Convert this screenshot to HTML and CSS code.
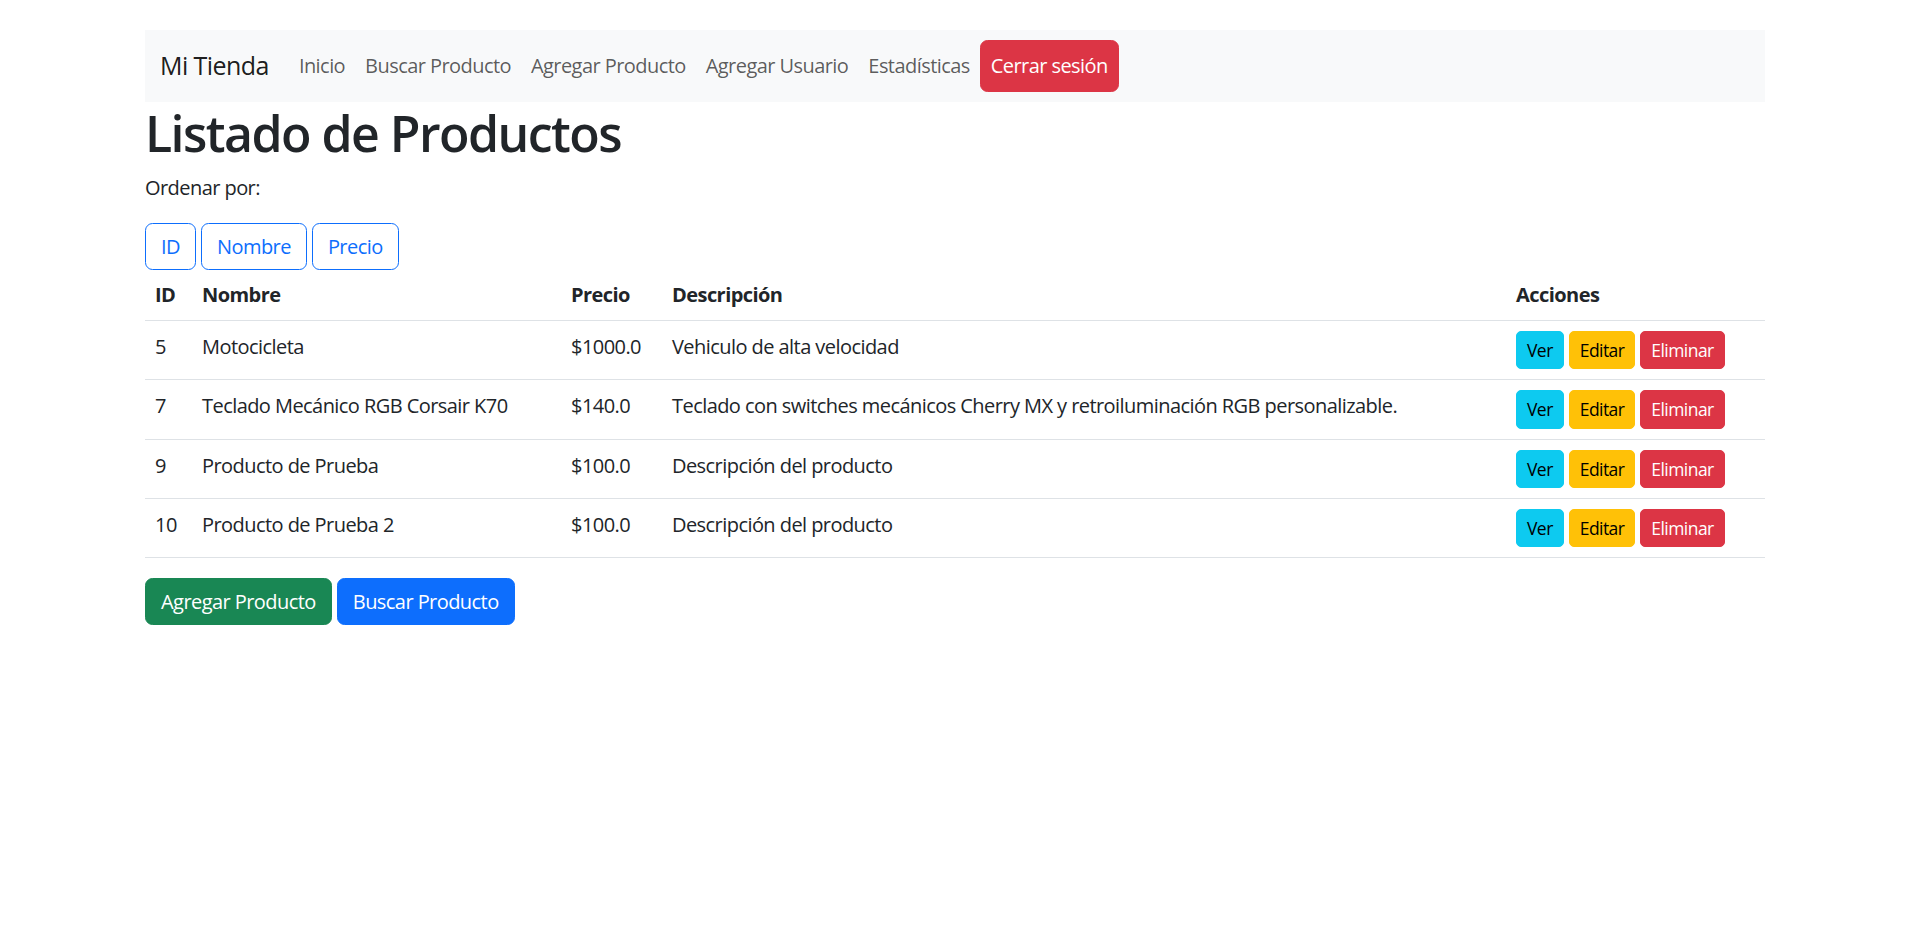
FILE: index.html
```html
<!DOCTYPE html>
<html lang="es">
<head>
<meta charset="utf-8">
<title>Listado de Productos</title>
<link rel="stylesheet" href="styles.css">
</head>
<body>
<div class="page">
  <nav class="navbar">
    <div class="navbar-inner">
      <a class="brand" href="#">Mi Tienda</a>
      <a class="nav-link" href="#">Inicio</a>
      <a class="nav-link" href="#">Buscar Producto</a>
      <a class="nav-link" href="#">Agregar Producto</a>
      <a class="nav-link" href="#">Agregar Usuario</a>
      <a class="nav-link" href="#">Estadísticas</a>
      <a class="nav-link logout" href="#">Cerrar sesión</a>
    </div>
  </nav>

  <h1 class="title">Listado de Productos</h1>
  <p class="sort-label">Ordenar por:</p>
  <div class="sort-buttons">
    <a class="btn btn-outline" href="#">ID</a>
    <a class="btn btn-outline" href="#">Nombre</a>
    <a class="btn btn-outline" href="#">Precio</a>
  </div>

  <table class="table">
    <colgroup>
      <col class="c-id">
      <col class="c-name">
      <col class="c-price">
      <col class="c-desc">
      <col class="c-act">
    </colgroup>
    <thead>
      <tr><th>ID</th><th>Nombre</th><th>Precio</th><th>Descripción</th><th>Acciones</th></tr>
    </thead>
    <tbody>
      <tr>
        <td>5</td><td>Motocicleta</td><td>$1000.0</td><td>Vehiculo de alta velocidad</td>
        <td><div class="actions"><a class="btn-sm info" href="#">Ver</a><a class="btn-sm warning" href="#">Editar</a><a class="btn-sm danger" href="#">Eliminar</a></div></td>
      </tr>
      <tr>
        <td>7</td><td>Teclado Mecánico RGB Corsair K70</td><td>$140.0</td><td>Teclado con switches mecánicos Cherry MX y retroiluminación RGB personalizable.</td>
        <td><div class="actions"><a class="btn-sm info" href="#">Ver</a><a class="btn-sm warning" href="#">Editar</a><a class="btn-sm danger" href="#">Eliminar</a></div></td>
      </tr>
      <tr>
        <td>9</td><td>Producto de Prueba</td><td>$100.0</td><td>Descripción del producto</td>
        <td><div class="actions"><a class="btn-sm info" href="#">Ver</a><a class="btn-sm warning" href="#">Editar</a><a class="btn-sm danger" href="#">Eliminar</a></div></td>
      </tr>
      <tr>
        <td>10</td><td>Producto de Prueba 2</td><td>$100.0</td><td>Descripción del producto</td>
        <td><div class="actions"><a class="btn-sm info" href="#">Ver</a><a class="btn-sm warning" href="#">Editar</a><a class="btn-sm danger" href="#">Eliminar</a></div></td>
      </tr>
    </tbody>
  </table>

  <div class="bottom-buttons">
    <a class="btn btn-success" href="#">Agregar Producto</a>
    <a class="btn btn-primary" href="#">Buscar Producto</a>
  </div>
</div>
</body>
</html>
```
FILE: styles.css
```css
* { box-sizing: border-box; }

body {
  margin: 0;
  font-family: "Segoe UI", "Open Sans", "Noto Sans", sans-serif;
  font-size: 20px;
  line-height: 1.5;
  letter-spacing: -0.028em;
  color: #212529;
  background: #fff;
}

a { text-decoration: none; }

.page {
  max-width: 1650px;
  margin: 30px auto 0;
  padding: 0 15px;
}

.navbar {
  background: #f8f9fa;
  padding: 10px 0;
}

.navbar-inner {
  display: flex;
  align-items: center;
  padding: 0 15px;
}

.brand {
  font-size: 25px;
  line-height: 1.5;
  padding: 6px 0;
  margin-right: 20px;
  color: rgba(0, 0, 0, 0.9);
}

.nav-link {
  padding: 10px;
  color: rgba(0, 0, 0, 0.65);
  line-height: 30px;
}

.logout {
  background: #dc3545;
  border: 1px solid #dc3545;
  border-radius: 7.5px;
  color: #fff;
}

.title {
  font-size: 50px;
  font-weight: 600;
  line-height: 1.2;
  letter-spacing: -1.55px;
  margin: 0 0 10px;
  padding-top: 1px;
}

.sort-label {
  margin: 0 0 20px;
}

.sort-buttons,
.bottom-buttons {
  display: flex;
  gap: 5px;
}

.btn {
  display: inline-block;
  padding: 7.5px 15px;
  border: 1px solid transparent;
  border-radius: 7.5px;
  font-size: 20px;
  line-height: 30px;
}

.btn-outline {
  border-color: #0d6efd;
  color: #0d6efd;
}

.btn-success {
  background: #198754;
  border-color: #198754;
  color: #fff;
}

.btn-primary {
  background: #0d6efd;
  border-color: #0d6efd;
  color: #fff;
}

.table {
  width: 100%;
  border-collapse: collapse;
  table-layout: fixed;
  margin-bottom: 20px;
}

.c-id { width: 47px; }
.c-name { width: 369px; }
.c-price { width: 101px; }
.c-desc { width: 844px; }
.c-act { width: 259px; }

.table th,
.table td {
  padding: 10px;
  text-align: left;
  vertical-align: top;
  border-bottom: 1px solid #dee2e6;
}

.table td {
  padding-top: 11px;
  padding-bottom: 9px;
}

.table th {
  font-weight: 700;
  vertical-align: bottom;
}

.actions {
  display: flex;
  gap: 5px;
  margin-top: -1px;
  margin-bottom: 1px;
}

.btn-sm {
  display: inline-block;
  padding: 5px 10px;
  border: 1px solid transparent;
  border-radius: 5px;
  font-size: 17.5px;
  line-height: 26.25px;
}

.info { background: #0dcaf0; border-color: #0dcaf0; color: #000; }
.warning { background: #ffc107; border-color: #ffc107; color: #000; }
.danger { background: #dc3545; border-color: #dc3545; color: #fff; }
```
